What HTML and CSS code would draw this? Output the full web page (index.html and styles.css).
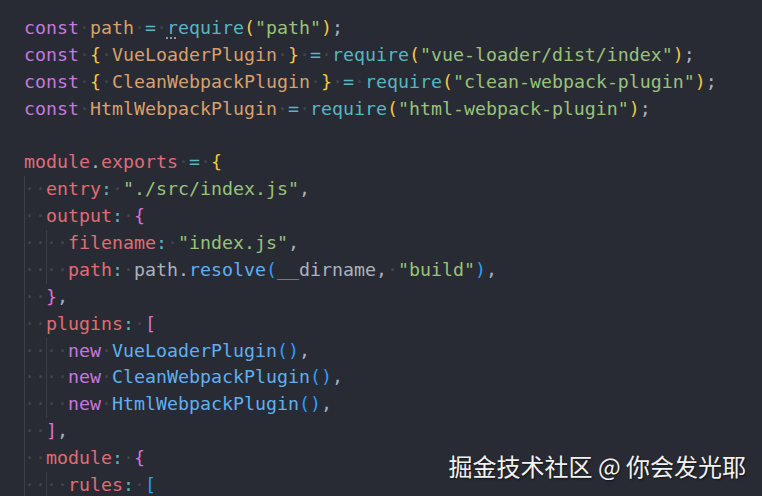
FILE: index.html
```html
<!DOCTYPE html>
<html lang="zh">
<head>
<meta charset="utf-8">
<link rel="stylesheet" href="styles.css">
</head>
<body>
<div class="editor">
<div class="code">
<div class="line"><span class="k">const</span><span class="w">·</span><span class="v">path</span><span class="w">·</span><span class="o">=</span><span class="w">·</span><span class="f"><span class="hint">r</span>equire</span><span class="y">(</span><span class="s">"path"</span><span class="y">)</span><span class="p">;</span></div>
<div class="line"><span class="k">const</span><span class="w">·</span><span class="y">{</span><span class="w">·</span><span class="v">VueLoaderPlugin</span><span class="w">·</span><span class="y">}</span><span class="w">·</span><span class="o">=</span><span class="w">·</span><span class="f">require</span><span class="y">(</span><span class="s">"vue-loader/dist/index"</span><span class="y">)</span><span class="p">;</span></div>
<div class="line"><span class="k">const</span><span class="w">·</span><span class="y">{</span><span class="w">·</span><span class="v">CleanWebpackPlugin</span><span class="w">·</span><span class="y">}</span><span class="w">·</span><span class="o">=</span><span class="w">·</span><span class="f">require</span><span class="y">(</span><span class="s">"clean-webpack-plugin"</span><span class="y">)</span><span class="p">;</span></div>
<div class="line"><span class="k">const</span><span class="w">·</span><span class="v">HtmlWebpackPlugin</span><span class="w">·</span><span class="o">=</span><span class="w">·</span><span class="f">require</span><span class="y">(</span><span class="s">"html-webpack-plugin"</span><span class="y">)</span><span class="p">;</span></div>
<div class="line"> </div>
<div class="line"><span class="r">module</span><span class="p">.</span><span class="r">exports</span><span class="w">·</span><span class="o">=</span><span class="w">·</span><span class="y">{</span></div>
<div class="line"><span class="ind">··</span><span class="r">entry</span><span class="o">:</span><span class="w">·</span><span class="s">"./src/index.js"</span><span class="p">,</span></div>
<div class="line"><span class="ind">··</span><span class="r">output</span><span class="o">:</span><span class="w">·</span><span class="m">{</span></div>
<div class="line"><span class="ind">··</span><span class="ind">··</span><span class="r">filename</span><span class="o">:</span><span class="w">·</span><span class="s">"index.js"</span><span class="p">,</span></div>
<div class="line"><span class="ind">··</span><span class="ind">··</span><span class="r">path</span><span class="o">:</span><span class="w">·</span><span class="t">path</span><span class="p">.</span><span class="c">resolve</span><span class="b">(</span><span class="t">__dirname</span><span class="p">,</span><span class="w">·</span><span class="s">"build"</span><span class="b">)</span><span class="p">,</span></div>
<div class="line"><span class="ind">··</span><span class="m">}</span><span class="p">,</span></div>
<div class="line"><span class="ind">··</span><span class="r">plugins</span><span class="o">:</span><span class="w">·</span><span class="m">[</span></div>
<div class="line"><span class="ind">··</span><span class="ind">··</span><span class="k">new</span><span class="w">·</span><span class="c">VueLoaderPlugin</span><span class="b">()</span><span class="p">,</span></div>
<div class="line"><span class="ind">··</span><span class="ind">··</span><span class="k">new</span><span class="w">·</span><span class="c">CleanWebpackPlugin</span><span class="b">()</span><span class="p">,</span></div>
<div class="line"><span class="ind">··</span><span class="ind">··</span><span class="k">new</span><span class="w">·</span><span class="c">HtmlWebpackPlugin</span><span class="b">()</span><span class="p">,</span></div>
<div class="line"><span class="ind">··</span><span class="m">]</span><span class="p">,</span></div>
<div class="line"><span class="ind">··</span><span class="r">module</span><span class="o">:</span><span class="w">·</span><span class="m">{</span></div>
<div class="line"><span class="ind">··</span><span class="ind">··</span><span class="r">rules</span><span class="o">:</span><span class="w">·</span><span class="b">[</span></div>
</div>
<div class="watermark">掘金技术社区 @ 你会发光耶</div>
</div>
</body>
</html>
```

FILE: styles.css
```css
html, body {
  margin: 0;
  padding: 0;
  background: #282b34;
}
.editor {
  position: relative;
  width: 762px;
  height: 496px;
  overflow: hidden;
  background: #282b34;
}
.code {
  padding: 15px 0 0 24px;
  font-family: "DejaVu Sans Mono", "Liberation Mono", monospace;
  font-size: 18.27px;
  line-height: 26.875px;
  color: #abb2bf;
}
.line {
  white-space: pre;
  height: 26.875px;
}
.ind {
  display: inline-block;
  vertical-align: top;
  height: 26.875px;
  box-shadow: inset 1px 0 0 #3b3f49;
  color: #41454f;
}
.w { color: #41454f; }
.k { color: #c678dd; }
.v { color: #d8a06b; }
.f { color: #56b6c2; }
.s { color: #98c379; }
.y { color: #f5c542; }
.p { color: #abb2bf; }
.o { color: #56b6c2; }
.r { color: #e06c75; }
.m { color: #da70d6; }
.b { color: #2f9cf5; }
.c { color: #61afef; }
.t { color: #abb2bf; }
.hint {
  text-decoration: underline dotted #9aa0aa;
  text-underline-offset: 4px;
}
.watermark {
  position: absolute;
  right: 16px;
  top: 450px;
  font-family: "Noto Sans CJK SC", sans-serif;
  font-size: 24px;
  line-height: 32px;
  color: #f2f2f2;
  text-shadow: 1px 1px 2px rgba(0, 0, 0, 0.6);
}
```
